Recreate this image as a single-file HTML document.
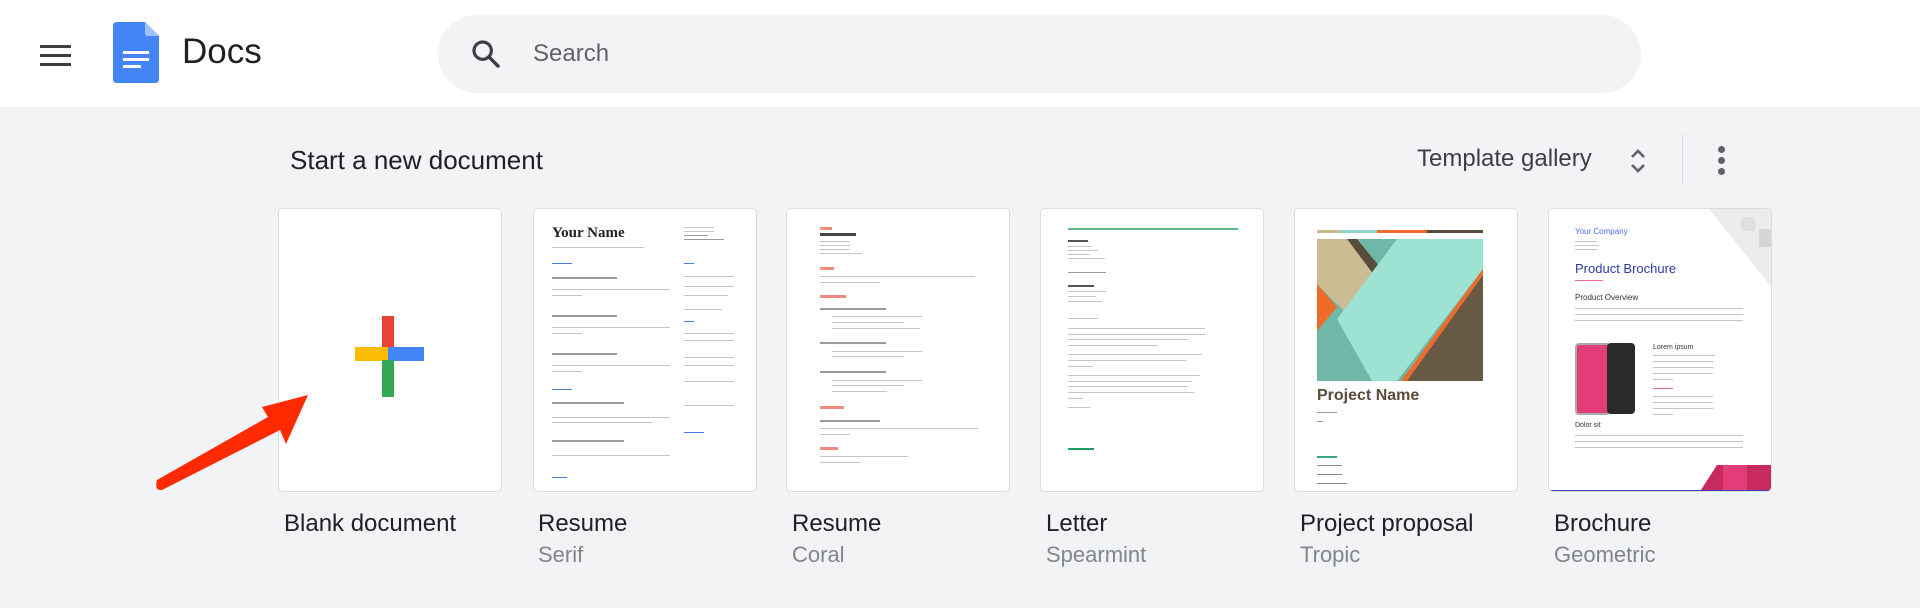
<!DOCTYPE html>
<html><head><meta charset="utf-8"><style>
*{margin:0;padding:0;box-sizing:border-box}
body{width:1920px;height:608px;background:#f1f3f4;font-family:"Liberation Sans",Arial,sans-serif;position:relative;overflow:hidden;color:#202124}
.a{position:absolute}
.hdr{left:0;top:0;width:1920px;height:107px;background:#fff}
.card{position:absolute;top:208px;width:224px;height:284px;background:#fff;border:1px solid #dadce0;border-radius:5px;overflow:hidden}
.t{position:absolute;top:510px;font-size:24px;color:#202124}
.s{position:absolute;top:542px;font-size:22px;color:#80868b}
.l{position:absolute;height:2px;background:#c4c4c4}
.d{position:absolute;height:2px;background:#9a9a9a}
</style></head><body>
<div class="a hdr"></div>
<!-- hamburger -->
<div class="a" style="left:40px;top:45px;width:31px;height:3px;background:#3c4043"></div>
<div class="a" style="left:40px;top:54px;width:31px;height:3px;background:#3c4043"></div>
<div class="a" style="left:40px;top:63px;width:31px;height:3px;background:#3c4043"></div>
<!-- docs logo -->
<svg class="a" style="left:113px;top:22px" width="46" height="61" viewBox="0 0 46 61">
<path d="M4 0H32L46 14V57Q46 61 42 61H4Q0 61 0 57V4Q0 0 4 0Z" fill="#4285f4"/>
<path d="M32 0L46 14H35Q32 14 32 11Z" fill="#a1c2fa"/>
<rect x="10" y="29" width="26" height="3" fill="#fff"/><rect x="10" y="36" width="26" height="3" fill="#fff"/><rect x="10" y="43" width="18" height="3" fill="#fff"/>
</svg>
<div class="a" style="left:182px;top:32px;font-size:35px;color:#202124">Docs</div>
<!-- search -->
<div class="a" style="left:438px;top:15px;width:1203px;height:78px;border-radius:39px;background:#f1f3f4"></div>
<svg class="a" style="left:470px;top:38px" width="32" height="32" viewBox="0 0 24 24"><circle cx="9.5" cy="9.5" r="6.5" fill="none" stroke="#3c4043" stroke-width="2.4"/><path d="M14.5 14.5L21 21" stroke="#3c4043" stroke-width="2.6" stroke-linecap="round"/></svg>
<div class="a" style="left:533px;top:40px;font-size:24px;color:#5f6368">Search</div>
<!-- section header -->
<div class="a" style="left:290px;top:145px;font-size:26px;color:#202124">Start a new document</div>
<div class="a" style="left:1417px;top:145px;font-size:24px;color:#3c4043">Template gallery</div>
<svg class="a" style="left:1628px;top:146px" width="20" height="30" viewBox="0 0 20 30"><path d="M4 11L10 5L16 11M4 19L10 25L16 19" fill="none" stroke="#5f6368" stroke-width="2.6"/></svg>
<div class="a" style="left:1682px;top:134px;width:1px;height:50px;background:#dadce0"></div>
<div class="a" style="left:1718px;top:146px;width:7px;height:7px;border-radius:50%;background:#5f6368"></div>
<div class="a" style="left:1718px;top:157px;width:7px;height:7px;border-radius:50%;background:#5f6368"></div>
<div class="a" style="left:1718px;top:168px;width:7px;height:7px;border-radius:50%;background:#5f6368"></div>

<!-- card1 blank -->
<div class="card" style="left:278px">
<div class="a" style="left:103px;top:107px;width:12px;height:37px;background:#ea4335"></div>
<div class="a" style="left:76px;top:138px;width:35px;height:14px;background:#fbbc04"></div>
<div class="a" style="left:109px;top:138px;width:36px;height:14px;background:#4285f4"></div>
<div class="a" style="left:103px;top:151px;width:12px;height:37px;background:#34a853"></div>
</div>
<!-- card2 resume serif -->
<div class="card" style="left:533px">
<div class="a" style="left:18px;top:16px;font-family:'Liberation Serif',serif;font-weight:bold;font-size:15px">Your Name</div>
<div class="l" style="left:18px;top:38px;width:92px;height:1px"></div>
<div class="l" style="left:150px;top:18px;width:30px;height:1px"></div><div class="l" style="left:150px;top:22px;width:30px;height:1px"></div><div class="d" style="left:150px;top:26px;width:24px;height:1px"></div><div class="d" style="left:150px;top:30px;width:40px;height:1px"></div>
<div class="l" style="left:18px;top:54px;width:20px;height:1px;background:#4a7be0"></div>
<div class="l" style="left:150px;top:54px;width:10px;height:1px;background:#4a7be0"></div>
<div class="d" style="left:18px;top:68px;width:65px"></div><div class="l" style="left:18px;top:80px;width:118px;height:1px"></div><div class="l" style="left:18px;top:86px;width:30px;height:1px"></div>
<div class="d" style="left:18px;top:106px;width:65px"></div><div class="l" style="left:18px;top:118px;width:118px;height:1px"></div><div class="l" style="left:18px;top:124px;width:30px;height:1px"></div>
<div class="d" style="left:18px;top:144px;width:65px"></div><div class="l" style="left:18px;top:156px;width:118px;height:1px"></div><div class="l" style="left:18px;top:162px;width:30px;height:1px"></div>
<div class="l" style="left:18px;top:180px;width:20px;height:1px;background:#4a7be0"></div>
<div class="d" style="left:18px;top:193px;width:72px"></div><div class="l" style="left:18px;top:208px;width:118px;height:1px"></div><div class="l" style="left:18px;top:213px;width:100px;height:1px"></div>
<div class="d" style="left:18px;top:231px;width:72px"></div><div class="l" style="left:18px;top:246px;width:118px;height:1px"></div>
<div class="l" style="left:18px;top:268px;width:15px;height:1px;background:#4a7be0"></div>
<div class="l" style="left:150px;top:67px;width:50px;height:1px"></div><div class="l" style="left:150px;top:77px;width:50px;height:1px"></div><div class="l" style="left:150px;top:86px;width:44px;height:1px"></div><div class="l" style="left:150px;top:100px;width:38px;height:1px"></div>
<div class="l" style="left:150px;top:112px;width:10px;height:1px;background:#4a7be0"></div>
<div class="l" style="left:150px;top:124px;width:50px;height:1px"></div><div class="l" style="left:150px;top:131px;width:50px;height:1px"></div><div class="l" style="left:150px;top:148px;width:50px;height:1px"></div><div class="l" style="left:150px;top:156px;width:50px;height:1px"></div><div class="l" style="left:150px;top:172px;width:50px;height:1px"></div><div class="l" style="left:150px;top:196px;width:50px;height:1px"></div>
<div class="l" style="left:150px;top:223px;width:20px;height:1px;background:#4a7be0"></div>
</div>
<!-- card3 coral -->
<div class="card" style="left:786px">
<div class="a" style="left:33px;top:18px;width:12px;height:3px;background:#f28b82"></div>
<div class="d" style="left:33px;top:24px;width:36px;height:3px;background:#444"></div>
<div class="l" style="left:33px;top:32px;width:30px;height:1px"></div><div class="l" style="left:33px;top:36px;width:30px;height:1px"></div><div class="l" style="left:33px;top:40px;width:30px;height:1px"></div><div class="l" style="left:33px;top:44px;width:42px;height:1px"></div>
<div class="a" style="left:33px;top:58px;width:14px;height:3px;background:#f28b82"></div>
<div class="l" style="left:33px;top:67px;width:155px;height:1px"></div><div class="l" style="left:33px;top:73px;width:60px;height:1px"></div>
<div class="a" style="left:33px;top:86px;width:26px;height:3px;background:#f28b82"></div>
<div class="d" style="left:33px;top:99px;width:66px"></div>
<div class="l" style="left:45px;top:107px;width:90px;height:1px"></div><div class="l" style="left:45px;top:113px;width:72px;height:1px"></div><div class="l" style="left:45px;top:119px;width:88px;height:1px"></div>
<div class="d" style="left:33px;top:133px;width:66px"></div>
<div class="l" style="left:45px;top:142px;width:90px;height:1px"></div><div class="l" style="left:45px;top:147px;width:72px;height:1px"></div>
<div class="d" style="left:33px;top:162px;width:66px"></div>
<div class="l" style="left:45px;top:171px;width:90px;height:1px"></div><div class="l" style="left:45px;top:176px;width:72px;height:1px"></div><div class="l" style="left:45px;top:182px;width:55px;height:1px"></div>
<div class="a" style="left:33px;top:197px;width:24px;height:3px;background:#f28b82"></div>
<div class="d" style="left:33px;top:211px;width:60px"></div>
<div class="l" style="left:33px;top:219px;width:158px;height:1px"></div><div class="l" style="left:33px;top:225px;width:30px;height:1px"></div>
<div class="a" style="left:33px;top:238px;width:18px;height:3px;background:#f28b82"></div>
<div class="l" style="left:33px;top:247px;width:88px;height:1px"></div><div class="l" style="left:33px;top:253px;width:40px;height:1px"></div>
</div>
<!-- card4 letter -->
<div class="card" style="left:1040px">
<div class="a" style="left:27px;top:19px;width:170px;height:2px;background:#5fb88a"></div>
<div class="d" style="left:27px;top:31px;width:20px;background:#555"></div>
<div class="l" style="left:27px;top:37px;width:24px;height:1px"></div><div class="l" style="left:27px;top:41px;width:30px;height:1px"></div><div class="l" style="left:27px;top:45px;width:22px;height:1px"></div><div class="l" style="left:27px;top:49px;width:37px;height:1px"></div>
<div class="d" style="left:27px;top:63px;width:38px;height:1px"></div>
<div class="d" style="left:27px;top:76px;width:26px;background:#555"></div>
<div class="l" style="left:27px;top:82px;width:38px;height:1px"></div><div class="l" style="left:27px;top:87px;width:28px;height:1px"></div><div class="l" style="left:27px;top:92px;width:34px;height:1px"></div>
<div class="l" style="left:27px;top:109px;width:30px;height:1px"></div>
<div class="l" style="left:27px;top:119px;width:137px;height:1px"></div><div class="l" style="left:27px;top:125px;width:137px;height:1px"></div><div class="l" style="left:27px;top:130px;width:120px;height:1px"></div><div class="l" style="left:27px;top:136px;width:90px;height:1px"></div>
<div class="l" style="left:27px;top:145px;width:134px;height:1px"></div><div class="l" style="left:27px;top:151px;width:118px;height:1px"></div><div class="l" style="left:27px;top:157px;width:25px;height:1px"></div>
<div class="l" style="left:27px;top:166px;width:132px;height:1px"></div><div class="l" style="left:27px;top:172px;width:124px;height:1px"></div><div class="l" style="left:27px;top:177px;width:120px;height:1px"></div><div class="l" style="left:27px;top:183px;width:126px;height:1px"></div><div class="l" style="left:27px;top:189px;width:15px;height:1px"></div>
<div class="l" style="left:27px;top:198px;width:22px;height:1px"></div>
<div class="a" style="left:27px;top:239px;width:26px;height:2px;background:#1e9e5e"></div>
</div>
<!-- card5 project -->
<div class="card" style="left:1294px">
<div class="a" style="left:22px;top:21px;width:23px;height:3px;background:#c9b98e"></div>
<div class="a" style="left:45px;top:21px;width:37px;height:3px;background:#8fd3c7"></div>
<div class="a" style="left:82px;top:21px;width:50px;height:3px;background:#f06a2a"></div>
<div class="a" style="left:132px;top:21px;width:56px;height:3px;background:#5a4c3a"></div>
<svg class="a" style="left:22px;top:30px" width="166" height="142" viewBox="0 0 166 142">
<rect width="166" height="142" fill="#6fb8a7"/>
<polygon points="0,0 30,0 65,45 35,80 0,45" fill="#cbbd93"/>
<polygon points="30,0 40,0 85,55 75,60" fill="#5a4c3a"/>
<polygon points="0,45 20,68 0,92" fill="#f06a2a"/>
<polygon points="80,0 166,0 166,30 80,142 55,142 20,80" fill="#9ee2d4"/>
<polygon points="166,30 166,36 90,142 84,142" fill="#f06a2a"/>
<polygon points="166,36 166,142 90,142" fill="#675943"/>
</svg>
<div class="a" style="left:22px;top:178px;font-size:16px;font-family:'Liberation Sans Narrow','Liberation Sans',sans-serif;font-weight:bold;color:#5a4c3a">Project Name</div>
<div class="l" style="left:22px;top:203px;width:20px;height:1px;background:#999"></div>
<div class="l" style="left:22px;top:212px;width:6px;height:1px;background:#999"></div>
<div class="a" style="left:22px;top:247px;width:20px;height:2px;background:#3fa57c"></div>
<div class="l" style="left:22px;top:256px;width:25px;height:1px;background:#888"></div><div class="l" style="left:22px;top:265px;width:25px;height:1px;background:#888"></div><div class="l" style="left:22px;top:274px;width:30px;height:1px;background:#888"></div>
</div>
<!-- card6 brochure -->
<div class="card" style="left:1548px">
<svg class="a" style="left:160px;top:0" width="64" height="80" viewBox="0 0 64 80"><polygon points="0,0 64,0 64,80" fill="#ececec"/><rect x="32" y="8" width="14" height="14" fill="#e0e0e0"/><rect x="50" y="20" width="14" height="18" fill="#d6d6d6"/></svg>
<div class="a" style="left:26px;top:18px;font-size:8px;color:#4a6cf0">Your Company</div>
<div class="l" style="left:26px;top:32px;width:22px;height:1px"></div><div class="l" style="left:26px;top:36px;width:24px;height:1px"></div><div class="l" style="left:26px;top:40px;width:22px;height:1px"></div>
<div class="a" style="left:26px;top:52px;font-size:13px;color:#2c3aa8">Product Brochure</div>
<div class="a" style="left:26px;top:71px;width:28px;height:1px;background:#f06a8a"></div>
<div class="a" style="left:26px;top:84px;font-size:8px;color:#333">Product Overview</div>
<div class="l" style="left:26px;top:99px;width:168px;height:1px"></div><div class="l" style="left:26px;top:105px;width:168px;height:1px"></div><div class="l" style="left:26px;top:111px;width:168px;height:1px"></div>
<div class="a" style="left:26px;top:134px;width:36px;height:72px;border-radius:4px;background:#e23d78;border:2px solid #aaa"></div>
<div class="a" style="left:58px;top:134px;width:28px;height:71px;border-radius:4px;background:#2a2a2a"></div>
<div class="a" style="left:104px;top:135px;font-size:7px;color:#333">Lorem ipsum</div>
<div class="l" style="left:104px;top:146px;width:62px;height:1px"></div><div class="l" style="left:104px;top:152px;width:60px;height:1px"></div><div class="l" style="left:104px;top:158px;width:60px;height:1px"></div><div class="l" style="left:104px;top:164px;width:60px;height:1px"></div><div class="l" style="left:104px;top:170px;width:20px;height:1px"></div>
<div class="a" style="left:104px;top:179px;width:20px;height:1px;background:#f06a8a"></div>
<div class="l" style="left:104px;top:187px;width:60px;height:1px"></div><div class="l" style="left:104px;top:193px;width:60px;height:1px"></div><div class="l" style="left:104px;top:199px;width:60px;height:1px"></div><div class="l" style="left:104px;top:205px;width:20px;height:1px"></div>
<div class="a" style="left:26px;top:213px;font-size:7px;color:#333">Dolor sit</div>
<div class="l" style="left:26px;top:226px;width:168px;height:1px"></div><div class="l" style="left:26px;top:232px;width:168px;height:1px"></div><div class="l" style="left:26px;top:238px;width:168px;height:1px"></div>
<svg class="a" style="left:150px;top:256px" width="74" height="28" viewBox="0 0 74 28"><polygon points="18,0 74,0 74,28 0,28" fill="#c62a5e"/><rect x="24" y="0" width="24" height="28" fill="#e23d78"/></svg>
<div class="a" style="left:0;top:281px;width:224px;height:3px;background:#3b3fb5"></div>
</div>
<!-- arrow -->
<svg class="a" style="left:140px;top:380px" width="190" height="120" viewBox="0 0 190 120">
<path d="M17 100L128 37L122 27L168 15L146 64L140 50L22 110Q14 111 17 100Z" fill="#ff2a00"/>
</svg>
<!-- titles -->
<div class="t" style="left:284px">Blank document</div>
<div class="t" style="left:538px">Resume</div><div class="s" style="left:538px">Serif</div>
<div class="t" style="left:792px">Resume</div><div class="s" style="left:792px">Coral</div>
<div class="t" style="left:1046px">Letter</div><div class="s" style="left:1046px">Spearmint</div>
<div class="t" style="left:1300px">Project proposal</div><div class="s" style="left:1300px">Tropic</div>
<div class="t" style="left:1554px">Brochure</div><div class="s" style="left:1554px">Geometric</div>
</body></html>
